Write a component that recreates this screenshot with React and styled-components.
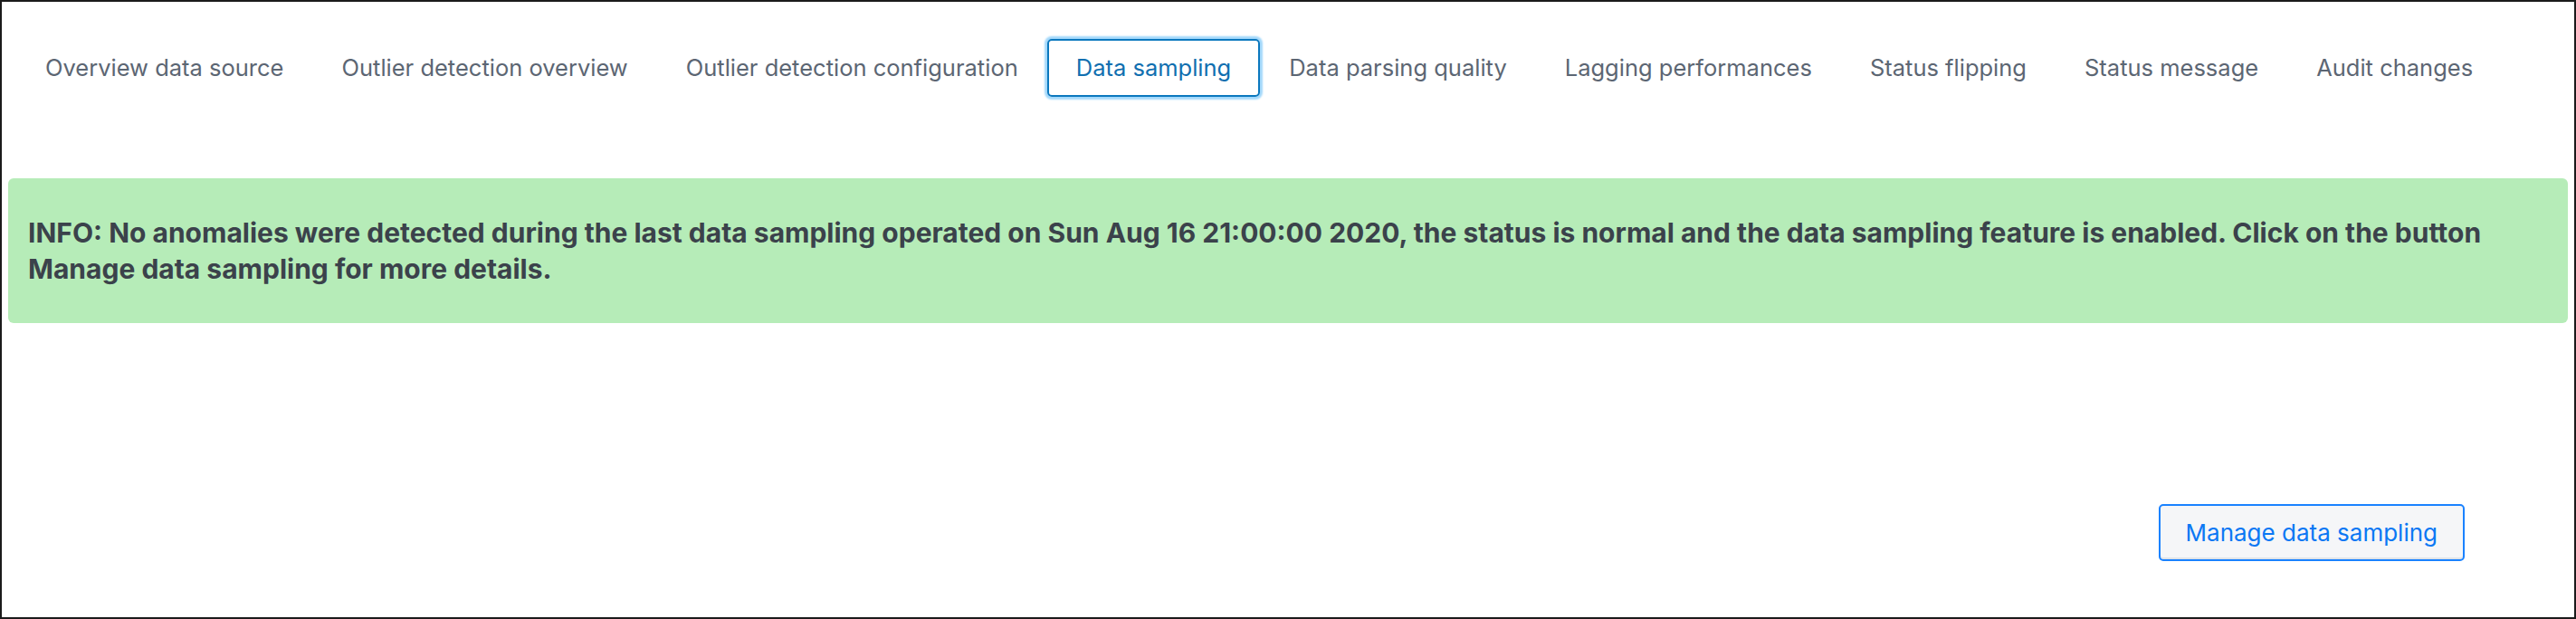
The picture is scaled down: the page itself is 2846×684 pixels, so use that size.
import React from "react";
import styled, { createGlobalStyle, css } from "styled-components";

const GlobalStyle = createGlobalStyle`
  html, body {
    margin: 0;
    padding: 0;
    background: #ffffff;
  }
  body {
    font-family: Inter, "Liberation Sans", Arial, sans-serif;
    -webkit-font-smoothing: antialiased;
  }
  * { box-sizing: border-box; }
`;

const Frame = styled.div`
  width: 2846px;
  height: 684px;
  border: 2px solid #1b1b1b;
  padding: 0 7px;
  display: flex;
  flex-direction: column;
  background: #ffffff;
`;

const TabBar = styled.nav`
  display: flex;
  align-items: center;
  padding: 41px 0 0 9px;
`;

const Tab = styled.button`
  font-family: inherit;
  font-size: 25.5px;
  line-height: 1;
  height: 64px;
  padding: 0 30px;
  border: 2px solid transparent;
  border-radius: 5px;
  background: transparent;
  color: #5c6673;
  white-space: nowrap;
  cursor: pointer;
  ${(p) =>
    p.$active &&
    css`
      color: #106fb0;
      border-color: #0b78be;
      box-shadow: 0 0 2px 3px #a3d8fb;
    `}
`;

const InfoBox = styled.div`
  margin-top: 90px;
  background: #b6ecb8;
  border-radius: 6px;
  padding: 40px 22px;
  font-size: 30px;
  font-weight: 700;
  line-height: 40px;
  color: #3b424b;
`;

const ActionRow = styled.div`
  margin-top: 200px;
  display: flex;
  justify-content: flex-end;
  padding-right: 114px;
`;

const ActionButton = styled.button`
  font-family: inherit;
  font-size: 26px;
  line-height: 1;
  height: 63px;
  padding: 0 28px;
  border: 2px solid #1a82ff;
  border-radius: 5px;
  background: #f5f6f8;
  color: #0b78f4;
  box-shadow: inset 0 -2px 0 #dfe3e8;
  cursor: pointer;
`;

const tabs = [
  "Overview data source",
  "Outlier detection overview",
  "Outlier detection configuration",
  "Data sampling",
  "Data parsing quality",
  "Lagging performances",
  "Status flipping",
  "Status message",
  "Audit changes",
];

export default function App() {
  const active = "Data sampling";
  return (
    <>
      <GlobalStyle />
      <Frame>
        <TabBar>
          {tabs.map((t) => (
            <Tab key={t} $active={t === active}>
              {t}
            </Tab>
          ))}
        </TabBar>
        <InfoBox>
          INFO: No anomalies were detected during the last data sampling operated on Sun Aug 16 21:00:00 2020, the status is normal and the data sampling feature is enabled. Click on the button
          <br />
          Manage data sampling for more details.
        </InfoBox>
        <ActionRow>
          <ActionButton>Manage data sampling</ActionButton>
        </ActionRow>
      </Frame>
    </>
  );
}
